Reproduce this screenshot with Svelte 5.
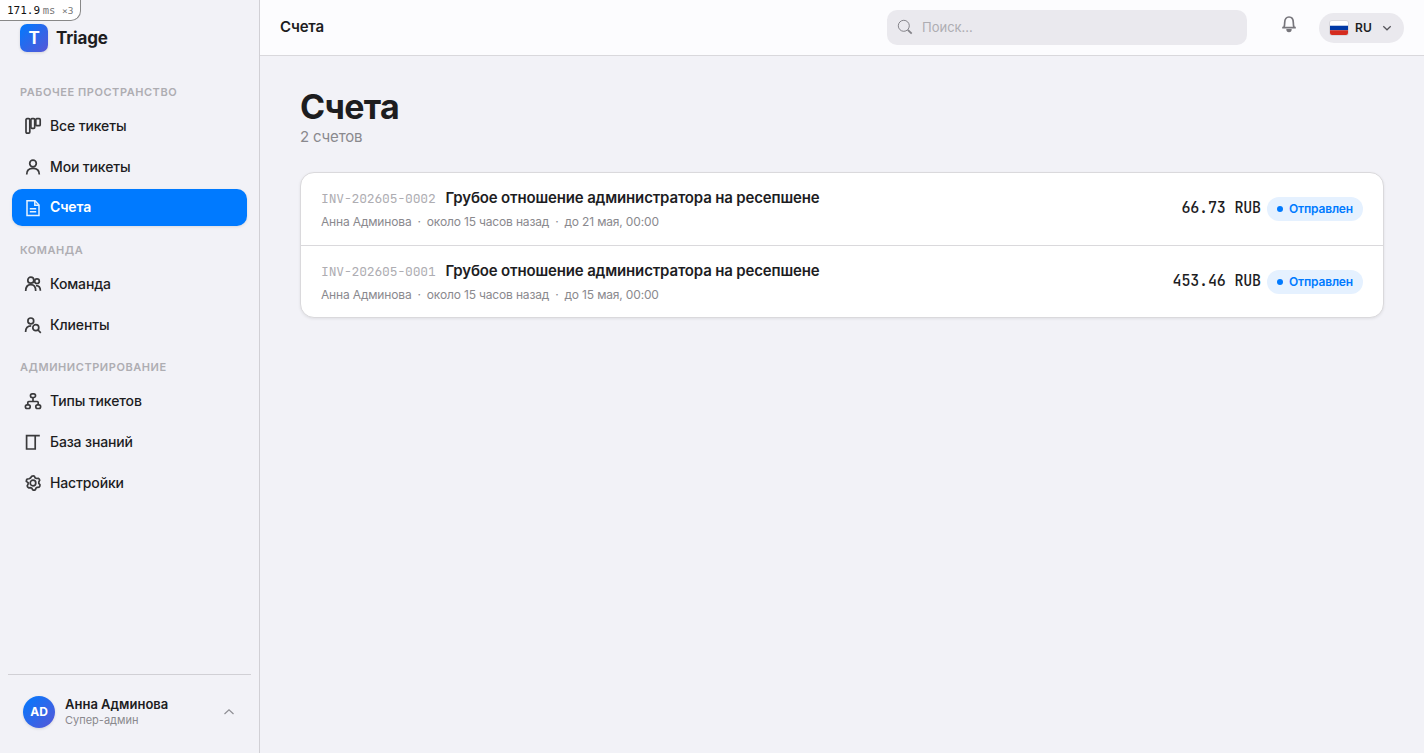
<script>
	let search = "";

	const groups = [
	  {
		title: "Рабочее пространство",
		items: [
		  { name: "Все тикеты", icon: "board" },
		  { name: "Мои тикеты", icon: "user" },
		  { name: "Счета", icon: "file", active: true }
		]
	  },
	  {
		title: "Команда",
		items: [
		  { name: "Команда", icon: "team" },
		  { name: "Клиенты", icon: "clients" }
		]
	  },
	  {
		title: "Администрирование",
		items: [
		  { name: "Типы тикетов", icon: "tree" },
		  { name: "База знаний", icon: "book" },
		  { name: "Настройки", icon: "gear" }
		]
	  }
	];

	const invoices = [
	  {
		number: "INV-202605-0002",
		title: "Грубое отношение администратора на ресепшене",
		author: "Анна Админова",
		created: "около 15 часов назад",
		due: "до 21 мая, 00:00",
		amount: "66.73 RUB",
		status: "Отправлен"
	  },
	  {
		number: "INV-202605-0001",
		title: "Грубое отношение администратора на ресепшене",
		author: "Анна Админова",
		created: "около 15 часов назад",
		due: "до 15 мая, 00:00",
		amount: "453.46 RUB",
		status: "Отправлен"
	  }
	];
</script>

<div class="profiler">171.9 <span class="unit">ms</span> <span class="count">×3</span></div>

<div class="app">
	<aside class="sidebar">
	  <div class="brand">
		<div class="logo">T</div>
		<span>Triage</span>
	  </div>
	  <nav>
		{#each groups as group}
		  <div class="group-title">{group.title}</div>
		  {#each group.items as item}
			<a class="nav-item" class:active={item.active} href="#/">
			  <svg viewBox="0 0 18 18" width="18" height="18">
				{#if item.icon === "board"}
				  <rect x="2" y="1.7" width="3.8" height="14.4" rx="1" />
				  <rect x="6.9" y="1.7" width="3.8" height="9.6" rx="1" />
				  <rect x="11.8" y="1.7" width="4.4" height="7" rx="1" />
				{:else if item.icon === "user"}
				  <circle cx="9" cy="5.5" r="3.3" />
				  <path d="M2.7 16.4c0-3.9 2.6-6 6.3-6s6.3 2.1 6.3 6" />
				{:else if item.icon === "file"}
				  <path d="M3 1.8h8L15 6v10.5H3z" />
				  <path d="M10.8 2v4.2H15M5.8 9.8h6.4M5.8 12.8h6.4" />
				{:else if item.icon === "team"}
				  <circle cx="6.8" cy="5.2" r="3" />
				  <path d="M1.7 16c0-3.9 1.9-6.3 5-6.3s5 2.4 5 6.3" />
				  <circle cx="13" cy="6.2" r="2.3" />
				  <path d="M12 10.6c2.9-.2 4.4 1.9 4.4 5.1" />
				{:else if item.icon === "clients"}
				  <circle cx="6.8" cy="4.9" r="2.9" />
				  <path d="M1.6 15.9c0-3.9 2-6.1 5.6-6.1" />
				  <circle cx="11.8" cy="11.7" r="3" />
				  <path d="M14 14l2.8 2.8" />
				{:else if item.icon === "tree"}
				  <rect x="6.5" y="1.9" width="5" height="3.6" rx="1.7" />
				  <rect x="1.4" y="12.9" width="4.8" height="3.6" rx="1.7" />
				  <rect x="11.8" y="12.9" width="4.8" height="3.6" rx="1.7" />
				  <path d="M9 5.5V9.3M3.8 12.9V10.5Q3.8 9.5 4.8 9.5h8.4q1 0 1 1v2.4" />
				{:else if item.icon === "book"}
				  <path d="M11.2 2.6H2.6V16h8.6zM11.2 2.6h4.6" />
				{:else}
				  <circle cx="9" cy="9" r="2.8" />
				  <path d="M7.8 2.2q1.5-.8 2.6 0l.7 1.6 1.3.7 1.8-.2q1.2.6 1.5 1.9l-.9 1.7v1.5l1.2 1.4q.1 1.5-.9 2.3l-1.9.2-1.2.8-.7 1.7q-1.3.8-2.6 0l-.9-1.6-1.3-.6-1.9.2q-1.2-.7-1.4-2l.9-1.7V8.7L2.3 7.3q0-1.5 1-2.3l1.8-.2 1.3-.8z" />
				{/if}
			  </svg>
			  <span>{item.name}</span>
			</a>
		  {/each}
		{/each}
	  </nav>
	  <div class="account">
		<div class="avatar">AD</div>
		<div class="account-text">
		  <div class="account-name">Анна Админова</div>
		  <div class="account-role">Супер-админ</div>
		</div>
		<svg viewBox="0 0 12 12" width="12" height="12"><path d="M1.5 8L6 3.8 10.5 8" /></svg>
	  </div>
	</aside>

	<div class="main">
	  <header>
		<div class="page-name">Счета</div>
		<label class="search">
		  <svg viewBox="0 0 16 16" width="16" height="16">
			<circle cx="6.8" cy="6.8" r="5.5" />
			<path d="M10.8 10.8l3.9 3.9" class="handle" />
		  </svg>
		  <input type="text" bind:value={search} placeholder="Поиск..." />
		</label>
		<button class="bell" aria-label="Уведомления">
		  <svg viewBox="0 0 18 18" width="18" height="18">
			<path d="M2.2 12.7h13.6M3.8 12.6c.8-1 .9-2.5.9-5C4.7 4 6.4 2 9 2s4.3 2 4.3 5.6c0 2.5.1 4 .9 5" />
			<path class="clapper" d="M6.3 14h5.4a2.7 3.2 0 0 1-5.4 0z" />
		  </svg>
		</button>
		<button class="lang">
		  <svg class="flag" viewBox="0 0 20 15" width="20" height="16" preserveAspectRatio="none">
			<path d="M0 0h20v5H0z" fill="#fff" />
			<path d="M0 5h20v5H0z" fill="#0039a6" />
			<path d="M0 10h20v5H0z" fill="#d52b1e" />
		  </svg>
		  <span>RU</span>
		  <svg class="chevron" viewBox="0 0 10 10" width="10" height="10"><path d="M1.3 3.2L5 6.8l3.7-3.6" /></svg>
		</button>
	  </header>

	  <main>
		<h1>Счета</h1>
		<p class="subtitle">2 счетов</p>
		<div class="card">
		  {#each invoices as invoice}
			<div class="invoice">
			  <div class="info">
				<div class="line">
				  <span class="number">{invoice.number}</span>
				  <span class="title">{invoice.title}</span>
				</div>
				<div class="meta">
				  <span>{invoice.author}</span>
				  <span>·</span>
				  <span>{invoice.created}</span>
				  <span>·</span>
				  <span>{invoice.due}</span>
				</div>
			  </div>
			  <div class="amount">{invoice.amount}</div>
			  <div class="status">{invoice.status}</div>
			</div>
		  {/each}
		</div>
	  </main>
	</div>
</div>

<style>
	:global(body) {
	  background: #f2f2f7;
	  color: #1d1d1f;
	  font-family: Inter, "Liberation Sans", sans-serif;
	  letter-spacing: -0.01em;
	  -webkit-font-smoothing: antialiased;
	}
	* {
	  box-sizing: border-box;
	}
	svg {
	  display: block;
	  flex: none;
	  fill: none;
	  stroke: currentColor;
	}
	button {
	  border: none;
	  padding: 0;
	  background: none;
	  font: inherit;
	  color: inherit;
	}
	.profiler {
	  position: absolute;
	  top: 0;
	  left: 0;
	  z-index: 10;
	  width: 81px;
	  height: 21px;
	  padding: 4px 0 0 7px;
	  border: 1px solid #888;
	  border-width: 0 1px 1px 0;
	  border-radius: 0 0 10px 0;
	  background: #fff;
	  color: #111;
	  font: 11px/13px "DejaVu Sans Mono", monospace;
	  letter-spacing: 0;
	  word-spacing: -4px;
	  white-space: nowrap;
	}
	.unit {
	  color: #777;
	  font-size: 10.5px;
	}
	.count {
	  margin-left: 4px;
	  color: #777;
	  font-size: 9.5px;
	}
	.app {
	  display: flex;
	  height: 100vh;
	}
	.sidebar {
	  display: flex;
	  flex-direction: column;
	  flex: none;
	  width: 260px;
	  border-right: 1px solid #d1d0d5;
	}
	.brand {
	  display: flex;
	  align-items: center;
	  gap: 8px;
	  height: 28px;
	  margin: 24px 20px 0;
	  font-size: 17px;
	  font-weight: 700;
	}
	.logo,
	.avatar {
	  display: flex;
	  align-items: center;
	  justify-content: center;
	  background: linear-gradient(135deg, #007aff, #5856d6);
	  color: #fff;
	  font-weight: 700;
	  box-shadow: 0 1px 3px rgba(0, 0, 0, 0.12);
	}
	.logo {
	  width: 28px;
	  height: 28px;
	  padding-bottom: 1px;
	  border-radius: 7px;
	}
	nav {
	  flex: 1;
	  padding: 16px 12px 0;
	}
	.group-title {
	  height: 35.75px;
	  margin-bottom: 4px;
	  padding: 16px 8px 0;
	  color: #aeadb2;
	  font-size: 11px;
	  line-height: 16px;
	  font-weight: 600;
	  letter-spacing: 0.05em;
	  text-transform: uppercase;
	}
	.nav-item {
	  display: flex;
	  align-items: center;
	  gap: 8px;
	  height: 36.75px;
	  margin-bottom: 4px;
	  padding: 0 12px;
	  border-radius: 10px;
	  color: #1d1d1f;
	  font-size: 14px;
	  font-weight: 500;
	  letter-spacing: -0.01em;
	  text-decoration: none;
	}
	.nav-item span {
	  padding-bottom: 1px;
	}
	.nav-item:has(+ .group-title) {
	  margin-bottom: 0;
	}
	.nav-item svg {
	  stroke-width: 1.7;
	  color: #3a3a3c;
	}
	.nav-item.active {
	  background: #007aff;
	  color: #fff;
	  font-weight: 600;
	  box-shadow: 0 1px 3px rgba(0, 0, 0, 0.1);
	}
	.nav-item.active span {
	  padding-bottom: 2px;
	}
	.nav-item.active svg {
	  stroke-width: 1.5;
	  color: #e6f2ff;
	}
	.account {
	  display: flex;
	  align-items: center;
	  gap: 10px;
	  height: 79px;
	  margin: 0 8px;
	  padding: 0 16px 4px 15px;
	  border-top: 1px solid #d1d0d5;
	  letter-spacing: 0;
	}
	.avatar {
	  width: 32px;
	  height: 32px;
	  padding-bottom: 1px;
	  border-radius: 50%;
	  font-size: 12px;
	}
	.account-text {
	  flex: 1;
	}
	.account-name {
	  font-size: 13px;
	  line-height: 16px;
	  font-weight: 600;
	}
	.account-role {
	  color: #8a898e;
	  font-size: 11px;
	  line-height: 16px;
	}
	.account svg {
	  stroke-width: 1.2;
	  color: #8e8e93;
	}
	.main {
	  flex: 1;
	}
	header {
	  display: flex;
	  align-items: center;
	  height: 56px;
	  padding: 0 20px;
	  border-bottom: 1px solid #d9d8dc;
	  background: #fcfcfe;
	}
	.page-name {
	  flex: 1;
	  padding-bottom: 2px;
	  font-size: 15px;
	  font-weight: 600;
	}
	.search {
	  display: flex;
	  align-items: center;
	  gap: 9px;
	  width: 360px;
	  height: 35px;
	  padding: 0 10px;
	  border-radius: 10px;
	  background: #eae9ee;
	  color: #85848a;
	}
	.search svg {
	  margin-bottom: 1px;
	}
	.search .handle {
	  stroke-width: 1.8;
	}
	.search input {
	  flex: 1;
	  border: none;
	  padding: 0 0 1px;
	  outline: none;
	  background: none;
	  font: 13px Inter, sans-serif;
	  letter-spacing: 0;
	}
	.search input::placeholder {
	  color: #aeadb2;
	}
	.bell {
	  margin: 0 21px 7px 33px;
	  color: #77767c;
	}
	.bell svg {
	  stroke-width: 1.7;
	}
	.bell .clapper {
	  fill: currentColor;
	  stroke: none;
	}
	.lang {
	  display: flex;
	  align-items: center;
	  gap: 6px;
	  width: 85px;
	  height: 30px;
	  padding: 0 12px 0 10px;
	  border-radius: 15px;
	  background: #eae9ee;
	  font-size: 12px;
	  font-weight: 600;
	  letter-spacing: 0.02em;
	}
	.lang span {
	  flex: 1;
	  text-align: left;
	}
	.flag {
	  border: 1px solid #d8d7dc;
	  border-radius: 3px;
	  stroke: none;
	}
	.chevron {
	  stroke-width: 1.2;
	  color: #55545a;
	}
	main {
	  padding: 30px 40px;
	}
	h1 {
	  margin: 0;
	  font-size: 34px;
	  line-height: 41px;
	  font-weight: 700;
	  letter-spacing: -0.02em;
	}
	.subtitle {
	  margin: 0 0 25px;
	  color: #8a898e;
	  font-size: 15px;
	  line-height: 20px;
	}
	.card {
	  border: 1px solid #dad9dc;
	  border-radius: 14px;
	  background: #fff;
	  box-shadow: 0 1px 3px rgba(0, 0, 0, 0.08);
	}
	.invoice {
	  display: flex;
	  align-items: center;
	  height: 72px;
	  padding: 0 20px;
	}
	.invoice + .invoice {
	  border-top: 1px solid #dad9dc;
	}
	.info {
	  flex: 1;
	}
	.invoice + .invoice .info {
	  padding-top: 1px;
	}
	.line {
	  display: flex;
	  align-items: baseline;
	  gap: 10px;
	  line-height: 22px;
	}
	.number {
	  color: #aeadb2;
	  font-family: "JetBrains Mono", "Liberation Mono", monospace;
	  font-size: 13px;
	}
	.title {
	  font-size: 15px;
	  font-weight: 600;
	}
	.meta {
	  display: flex;
	  gap: 6px;
	  margin-top: 3px;
	  padding-bottom: 1px;
	  color: #8a898e;
	  font-size: 12px;
	  line-height: 18px;
	}
	.amount {
	  margin-right: 6px;
	  padding-bottom: 2px;
	  font-family: "JetBrains Mono", "Liberation Mono", monospace;
	  font-size: 15px;
	  font-weight: 500;
	}
	.status {
	  display: flex;
	  align-items: center;
	  gap: 6px;
	  height: 24px;
	  padding: 0 10px;
	  border-radius: 12px;
	  background: #e5f1ff;
	  color: #007aff;
	  font-size: 12px;
	  line-height: 22px;
	  font-weight: 600;
	}
	.status::before {
	  content: "";
	  width: 6px;
	  height: 6px;
	  border-radius: 50%;
	  background: currentColor;
	}
</style>
